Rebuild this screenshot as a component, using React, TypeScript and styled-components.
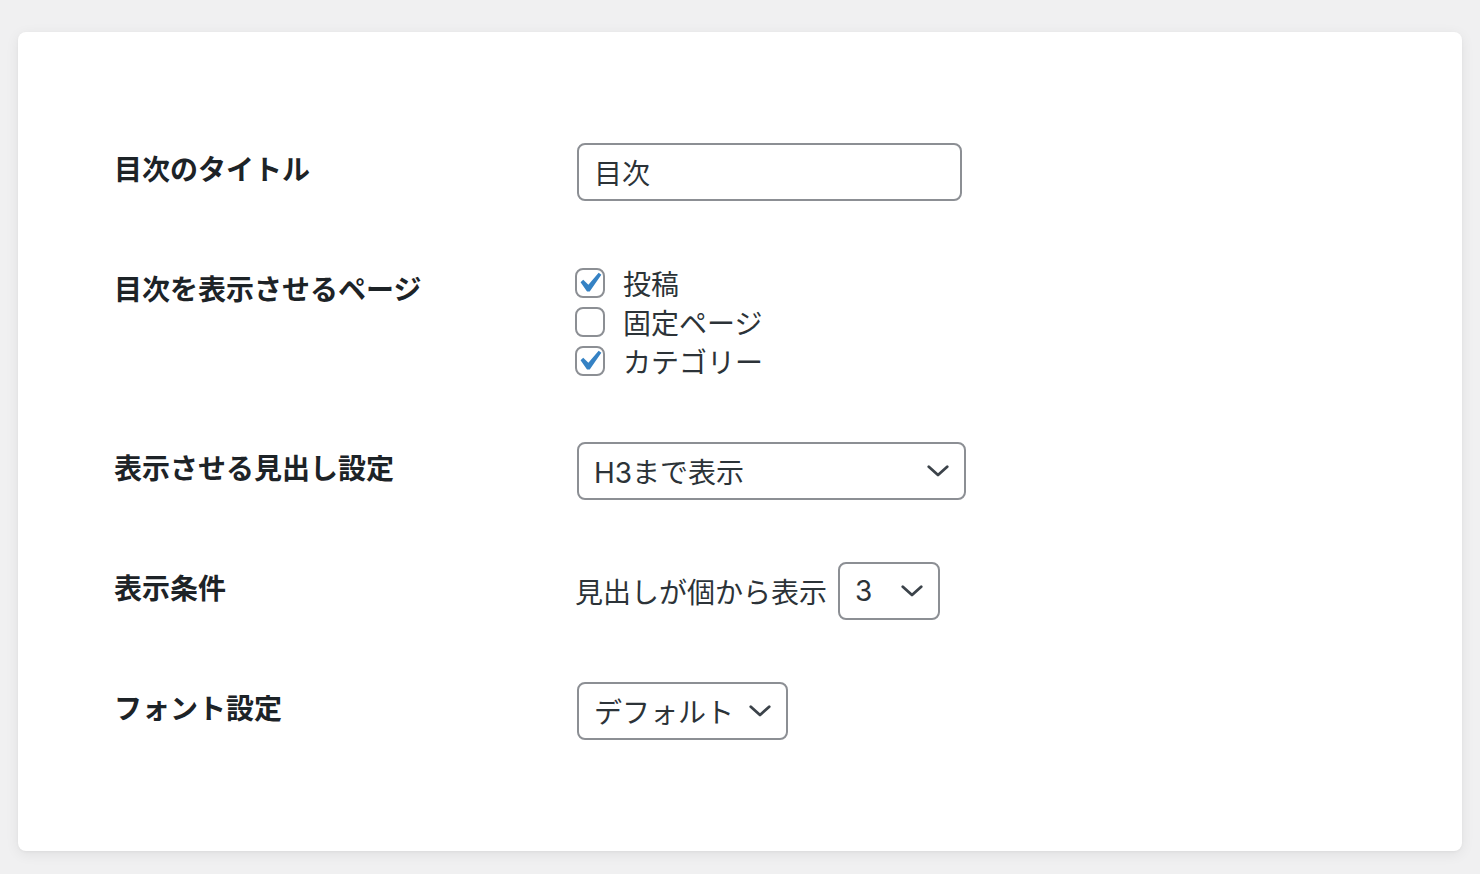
import React from "react";
import styled, { createGlobalStyle } from "styled-components";

const Global = createGlobalStyle`
  html, body { margin: 0; padding: 0; background: #f0f0f1; }
  body {
    font-family: "Inter", "Noto Sans CJK JP", sans-serif;
    color: #2c3338;
  }
  * { box-sizing: border-box; }
`;

const Page = styled.div`
  padding: 32px 18px 23px 18px;
`;

const Card = styled.div`
  background: #ffffff;
  border-radius: 8px;
  box-shadow: 0 3px 14px rgba(0, 0, 0, 0.07), 0 1px 3px rgba(0, 0, 0, 0.04);
  padding: 111px 96px;
  display: flex;
  flex-direction: column;
  gap: 62px;
`;

const Row = styled.div`
  display: grid;
  grid-template-columns: 463px 1fr;
  align-items: start;
`;

const Label = styled.div`
  font-size: 28px;
  font-weight: 700;
  color: #1d2327;
  line-height: 55px;
  white-space: nowrap;
`;

const Field = styled.div`
  display: flex;
  align-items: center;
  gap: 11px;
  font-size: 28px;
  color: #2c3338;
`;

const TextInput = styled.div`
  width: 385px;
  height: 58px;
  border: 2px solid #8c8f94;
  border-radius: 8px;
  padding: 0 15px;
  display: flex;
  align-items: center;
  font-size: 28px;
  color: #2c3338;
  background: #fff;
`;

const CheckList = styled.div`
  display: flex;
  flex-direction: column;
`;

const CheckRow = styled.label`
  display: flex;
  align-items: center;
  gap: 18px;
  height: 39px;
  font-size: 28px;
  color: #2c3338;
  margin-left: -2px;
`;

const Box = styled.span`
  position: relative;
  width: 30px;
  height: 30px;
  border: 2px solid #8c8f94;
  border-radius: 8px;
  background: #fff;
  flex: none;
`;

const Tick = styled.svg`
  position: absolute;
  left: -8px;
  top: -7px;
  width: 40px;
  height: 40px;
`;

const Select = styled.div<{ $w: number }>`
  width: ${(p) => p.$w}px;
  height: 58px;
  border: 2px solid #8c8f94;
  border-radius: 8px;
  background: #fff;
  padding: 0 15px 0 15px;
  display: flex;
  align-items: center;
  justify-content: space-between;
  font-size: 28px;
  color: #2c3338;
`;

const Chevron = () => (
  <svg width="22" height="12" viewBox="0 0 22 12" fill="none">
    <path d="M1.8 1.8 L11 10 L20.2 1.8" stroke="#3c434a" strokeWidth="2.8" strokeLinecap="round" strokeLinejoin="round" />
  </svg>
);

const Check = ({ checked, label }: { checked: boolean; label: string }) => (
  <CheckRow>
    <Box>
      {checked && (
        <Tick viewBox="0 0 20 20">
          <path d="M14.83 4.89l1.34.94-5.81 8.38H9.02L5.78 9.67l1.34-1.25 2.57 2.4z" fill="#3582c4" />
        </Tick>
      )}
    </Box>
    <span>{label}</span>
  </CheckRow>
);

export default function App() {
  return (
    <>
      <Global />
      <Page>
        <Card>
          <Row>
            <Label>目次のタイトル</Label>
            <Field>
              <TextInput>目次</TextInput>
            </Field>
          </Row>
          <Row>
            <Label>目次を表示させるページ</Label>
            <CheckList>
              <Check checked label="投稿" />
              <Check checked={false} label="固定ページ" />
              <Check checked label="カテゴリー" />
            </CheckList>
          </Row>
          <Row>
            <Label>表示させる見出し設定</Label>
            <Field>
              <Select $w={389}>
                <span>H3まで表示</span>
                <Chevron />
              </Select>
            </Field>
          </Row>
          <Row>
            <Label>表示条件</Label>
            <Field>
              <span style={{ marginLeft: -2 }}>見出しが個から表示</span>
              <Select $w={102}>
                <span>3</span>
                <Chevron />
              </Select>
            </Field>
          </Row>
          <Row>
            <Label>フォント設定</Label>
            <Field>
              <Select $w={211}>
                <span>デフォルト</span>
                <Chevron />
              </Select>
            </Field>
          </Row>
        </Card>
      </Page>
    </>
  );
}
